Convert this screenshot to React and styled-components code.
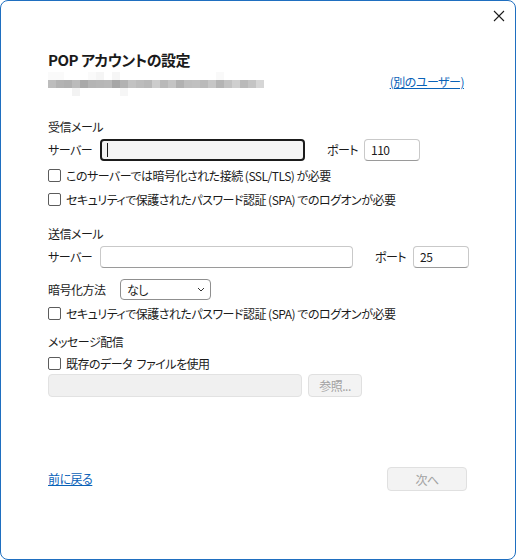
import React, { useState } from "react";
import styled, { createGlobalStyle } from "styled-components";

const GlobalStyle = createGlobalStyle`
  html, body {
    margin: 0;
    padding: 0;
    background: #ffffff;
  }
  body {
    font-family: "Noto Sans CJK JP", "Noto Sans", sans-serif;
    font-feature-settings: "palt";
    color: #1b1b1b;
  }
  button {
    font-feature-settings: "palt";
  }
`;

const Window = styled.div`
  position: relative;
  box-sizing: border-box;
  width: 516px;
  height: 560px;
  border: 1px solid #1f6fc0;
  border-radius: 8px;
  background: #ffffff;
  display: flex;
  flex-direction: column;
  padding: 49px 48px 68px 47px;
  font-size: 12px;
  letter-spacing: -0.5px;
`;

const CloseButton = styled.button`
  position: absolute;
  top: 8px;
  right: 9px;
  width: 14px;
  height: 14px;
  padding: 0;
  border: none;
  background: transparent;
  display: flex;
  align-items: center;
  justify-content: center;
`;

const Title = styled.h1`
  margin: 0;
  font-size: 15px;
  line-height: 20px;
  font-weight: 700;
  letter-spacing: -0.5px;
  color: #1b1b1b;
`;

const AccountRow = styled.div`
  margin-top: 2px;
  display: flex;
  align-items: center;
  justify-content: space-between;
`;

const Mosaic = styled.div`
  display: grid;
  grid-template-columns: repeat(27, 8px);
  grid-auto-rows: 8px;
`;

const Cell = styled.div`
  background: ${(p) => p.$c};
`;

const Link = styled.a`
  color: #0a62b8;
  text-decoration: underline;
  line-height: 16px;
  cursor: pointer;
  margin-top: ${(p) => p.$up || 0}px;
  margin-right: ${(p) => p.$mr || 0}px;
`;

const SectionTitle = styled.div`
  margin-top: ${(p) => p.$top}px;
  line-height: 16px;
`;

const FieldRow = styled.div`
  margin-top: ${(p) => p.$top}px;
  display: flex;
  align-items: center;
  height: ${(p) => p.$h || 22}px;
`;

const Label = styled.span`
  line-height: 16px;
  width: ${(p) => p.$w}px;
  margin-left: ${(p) => p.$ml || 0}px;
  flex: none;
`;

const TextBox = styled.div`
  box-sizing: border-box;
  width: ${(p) => p.$w}px;
  height: 100%;
  border: 1px solid #c9c9c9;
  border-bottom-color: #9a9a9a;
  border-radius: 4px;
  background: #ffffff;
  display: flex;
  align-items: center;
  padding-left: 6px;
  line-height: 16px;
  flex: none;
`;

const FocusBox = styled(TextBox)`
  border: 2px solid #1b1b1b;
  background: #f4f4f4;
  padding-left: 5px;
`;

const Caret = styled.span`
  width: 1px;
  height: 14px;
  background: #1b1b1b;
`;

const DisabledBox = styled(TextBox)`
  background: #f0f0f0;
  border-color: #e2e2e2;
`;

const Select = styled.div`
  box-sizing: border-box;
  width: 91px;
  height: 21px;
  border: 1px solid #8f8f8f;
  border-radius: 4px;
  display: flex;
  align-items: center;
  justify-content: space-between;
  padding: 0 5px 0 6px;
  line-height: 16px;
`;

const CheckRow = styled.label`
  margin-top: ${(p) => p.$top}px;
  display: flex;
  align-items: center;
  height: 20px;
  gap: 5px;
  cursor: default;
`;

const Box = styled.span`
  box-sizing: border-box;
  width: 13px;
  height: 13px;
  border: 1px solid #5c5c5c;
  border-radius: 2px;
  background: #ffffff;
  flex: none;
`;

const Button = styled.button`
  box-sizing: border-box;
  width: ${(p) => p.$w}px;
  height: 100%;
  margin-left: ${(p) => p.$ml || 0}px;
  border: 1px solid #e0e0e0;
  border-radius: 4px;
  background: #f3f3f3;
  color: #a2a2a2;
  font-family: inherit;
  font-size: 12px;
  letter-spacing: -0.5px;
  padding: 0;
`;

const Footer = styled.div`
  margin-top: auto;
  display: flex;
  align-items: center;
  justify-content: space-between;
  height: 24px;
`;

const shades = [
  "fafafa fafafa ffffff ffffff ffffff fafafa f5f5f5 ffffff f6f6f6 ffffff ffffff ffffff ffffff ffffff ffffff ffffff ffffff ffffff ffffff ffffff ffffff f9f9f9 ffffff ffffff ffffff ffffff ffffff",
  "bdbdbd b3b3b3 b0b0b0 bbbbbb a9a9a9 b4b4b4 b6b6b6 b8b8b8 a6a6a6 b2b2b2 c2c2c2 bcbcbc b8b8b8 cccccc b9b9b9 c4c4c4 b1b1b1 bebebe c0c0c0 bababa c6c6c6 b4b4b4 c2c2c2 cfcfcf bababa c4c4c4 d6d6d6",
  "ffffff ffffff ffffff f3f3f3 ffffff ffffff ffffff ffffff ffffff f6f6f6 ffffff ffffff ffffff ffffff ffffff ffffff ffffff ffffff ffffff ffffff ffffff ffffff ffffff ffffff ffffff ffffff ffffff",
];

function Checkbox({ top, children }) {
  return (
    <CheckRow $top={top}>
      <Box />
      <span>{children}</span>
    </CheckRow>
  );
}

export default function App() {
  const [encrypt] = useState("なし");

  return (
    <>
      <GlobalStyle />
      <Window>
        <CloseButton aria-label="閉じる">
          <svg width="12" height="12" viewBox="0 0 12 12">
            <path d="M1 1 L11 11 M11 1 L1 11" stroke="#1b1b1b" strokeWidth="1.1" />
          </svg>
        </CloseButton>

        <Title>POP アカウントの設定</Title>
        <AccountRow>
          <Mosaic>
            {shades.map((row, r) =>
              row.split(" ").map((c, i) => <Cell key={r + "-" + i} $c={"#" + c} />)
            )}
          </Mosaic>
          <Link $up={-4} $mr={3}>(別のユーザー)</Link>
        </AccountRow>

        <SectionTitle $top={23}>受信メール</SectionTitle>
        <FieldRow $top={4}>
          <Label $w={52}>サーバー</Label>
          <FocusBox $w={205}>
            <Caret />
          </FocusBox>
          <Label $w={37} $ml={22}>ポート</Label>
          <TextBox $w={56}>110</TextBox>
        </FieldRow>
        <Checkbox top={4}>このサーバーでは暗号化された接続 (SSL/TLS) が必要</Checkbox>
        <Checkbox top={4}>セキュリティで保護されたパスワード認証 (SPA) でのログオンが必要</Checkbox>

        <SectionTitle $top={17}>送信メール</SectionTitle>
        <FieldRow $top={4}>
          <Label $w={52}>サーバー</Label>
          <TextBox $w={253} />
          <Label $w={38} $ml={22}>ポート</Label>
          <TextBox $w={56}>25</TextBox>
        </FieldRow>
        <FieldRow $top={11} $h={21}>
          <Label $w={72}>暗号化方法</Label>
          <Select>
            <span>{encrypt}</span>
            <svg width="8" height="5" viewBox="0 0 8 5">
              <path d="M1 1 L4 4 L7 1" stroke="#333" strokeWidth="1" fill="none" />
            </svg>
          </Select>
        </FieldRow>
        <Checkbox top={3}>セキュリティで保護されたパスワード認証 (SPA) でのログオンが必要</Checkbox>

        <SectionTitle $top={11}>メッセージ配信</SectionTitle>
        <Checkbox top={3}>既存のデータ&nbsp;&nbsp;ファイルを使用</Checkbox>
        <FieldRow $top={1} $h={23}>
          <DisabledBox $w={254} />
          <Button $w={54} $ml={6} disabled>参照...</Button>
        </FieldRow>

        <Footer>
          <Link>前に戻る</Link>
          <Button $w={80} disabled>次へ</Button>
        </Footer>
      </Window>
    </>
  );
}
